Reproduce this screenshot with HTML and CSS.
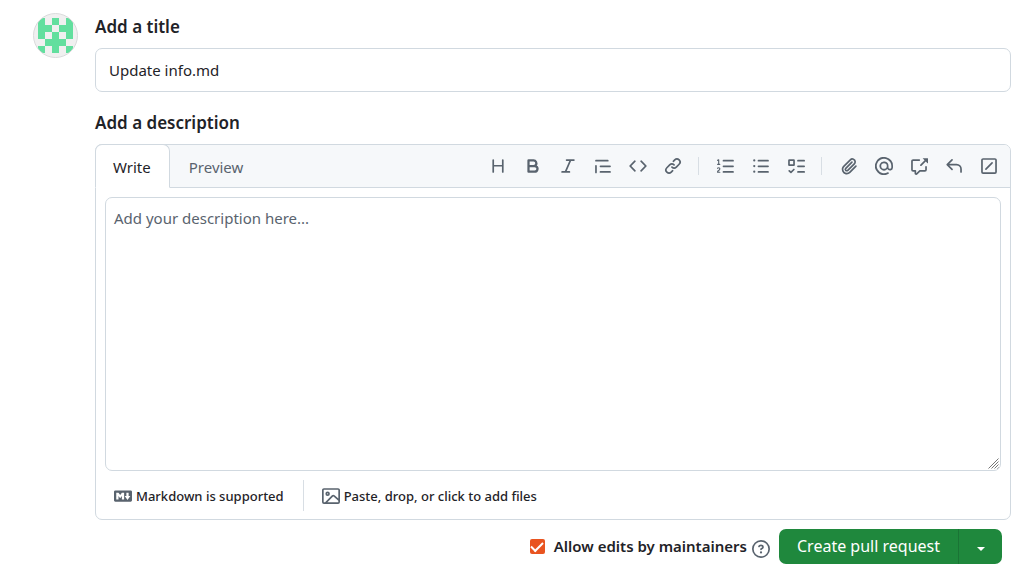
FILE: index.html
```html
<!DOCTYPE html>
<html lang="en">

<head>
	<meta charset="UTF-8">
	<meta name="viewport" content="width=device-width, initial-scale=1.0">
	<title>Open a pull request</title>
	<link rel="stylesheet" href="styles.css">
</head>

<body>
	<form class="pull-form">
		<svg class="avatar" viewBox="0 0 45 45" aria-hidden="true">
			<clipPath id="avatar-clip"><circle cx="22.5" cy="22.5" r="22" /></clipPath>
			<g clip-path="url(#avatar-clip)">
				<path fill="#f0f0f0" d="M0 0h45v45H0z" />
				<path fill="#62df9e" d="M5 5h7v7h7v7h-7v7H5zM19 5h7v7h-7zM33 5h7v21h-7v-7h-7v-7h7zM19 19h7v7h7v7h-7v7h-7v-7h-7v-7h7zM5 33h7v7H5zM33 33h7v7h-7z" />
			</g>
			<circle cx="22.5" cy="22.5" r="22" fill="none" stroke="#d9dadb" />
		</svg>

		<div class="fields">
			<label class="field-label" for="title">Add a title</label>
			<input class="title-input" type="text" id="title" value="Update info.md">

			<label class="field-label" for="description">Add a description</label>
			<div class="editor">
				<div class="editor-header">
					<div class="tabs">
						<button type="button" class="tab active">Write</button>
						<button type="button" class="tab">Preview</button>
					</div>
					<div class="toolbar">
						<button type="button" class="tool" aria-label="Heading"><svg class="icon" viewBox="0 0 16 16"><path d="M3.75 2a.75.75 0 0 1 .75.75V7h7V2.75a.75.75 0 0 1 1.5 0v10.5a.75.75 0 0 1-1.5 0V8.5h-7v4.75a.75.75 0 0 1-1.5 0V2.75A.75.75 0 0 1 3.75 2Z" /></svg></button>
						<button type="button" class="tool" aria-label="Bold"><svg class="icon" viewBox="0 0 16 16"><path d="M4 2h4.5a3.501 3.501 0 0 1 2.852 5.53A3.499 3.499 0 0 1 9.5 14H4a1 1 0 0 1-1-1V3a1 1 0 0 1 1-1Zm1 7v3h4.5a1.5 1.5 0 0 0 0-3Zm3.5-2a1.5 1.5 0 0 0 0-3H5v3Z" /></svg></button>
						<button type="button" class="tool" aria-label="Italic"><svg class="icon" viewBox="0 0 16 16"><path d="M6 2.75A.75.75 0 0 1 6.75 2h6.5a.75.75 0 0 1 0 1.5h-2.505l-3.858 9H9.25a.75.75 0 0 1 0 1.5h-6.5a.75.75 0 0 1 0-1.5h2.505l3.858-9H6.75A.75.75 0 0 1 6 2.75Z" /></svg></button>
						<button type="button" class="tool" aria-label="Quote"><svg class="icon" viewBox="0 0 16 16"><path d="M1.75 2.5h10.5a.75.75 0 0 1 0 1.5H1.75a.75.75 0 0 1 0-1.5Zm4 5h8.5a.75.75 0 0 1 0 1.5h-8.5a.75.75 0 0 1 0-1.5Zm0 5h8.5a.75.75 0 0 1 0 1.5h-8.5a.75.75 0 0 1 0-1.5ZM2.5 7.75v6a.75.75 0 0 1-1.5 0v-6a.75.75 0 0 1 1.5 0Z" /></svg></button>
						<button type="button" class="tool" aria-label="Code"><svg class="icon" viewBox="0 0 16 16"><path d="m11.28 3.22 4.25 4.25a.75.75 0 0 1 0 1.06l-4.25 4.25a.749.749 0 0 1-1.275-.326.749.749 0 0 1 .215-.734L13.94 8l-3.72-3.72a.749.749 0 0 1 .326-1.275.749.749 0 0 1 .734.215Zm-6.56 0a.751.751 0 0 1 1.042.018.751.751 0 0 1 .018 1.042L2.06 8l3.72 3.72a.749.749 0 0 1-.326 1.275.749.749 0 0 1-.734-.215L.47 8.53a.75.75 0 0 1 0-1.06Z" /></svg></button>
						<button type="button" class="tool" aria-label="Link"><svg class="icon" viewBox="0 0 16 16"><path d="m7.775 3.275 1.25-1.25a3.5 3.5 0 1 1 4.95 4.95l-2.5 2.5a3.5 3.5 0 0 1-4.95 0 .751.751 0 0 1 .018-1.042.751.751 0 0 1 1.042-.018 1.998 1.998 0 0 0 2.83 0l2.5-2.5a2.002 2.002 0 0 0-2.83-2.83l-1.25 1.25a.751.751 0 0 1-1.042-.018.751.751 0 0 1-.018-1.042Zm-4.69 9.64a1.998 1.998 0 0 0 2.83 0l1.25-1.25a.751.751 0 0 1 1.042.018.751.751 0 0 1 .018 1.042l-1.25 1.25a3.5 3.5 0 1 1-4.95-4.95l2.5-2.5a3.5 3.5 0 0 1 4.95 0 .751.751 0 0 1-.018 1.042.751.751 0 0 1-1.042.018 1.998 1.998 0 0 0-2.83 0l-2.5 2.5a1.998 1.998 0 0 0 0 2.83Z" /></svg></button>
						<span class="divider"></span>
						<button type="button" class="tool" aria-label="Numbered list"><svg class="icon" viewBox="0 0 16 16"><path d="M5 3.25a.75.75 0 0 1 .75-.75h8.5a.75.75 0 0 1 0 1.5h-8.5A.75.75 0 0 1 5 3.25Zm0 5a.75.75 0 0 1 .75-.75h8.5a.75.75 0 0 1 0 1.5h-8.5A.75.75 0 0 1 5 8.25Zm0 5a.75.75 0 0 1 .75-.75h8.5a.75.75 0 0 1 0 1.5h-8.5a.75.75 0 0 1-.75-.75ZM.924 10.32a.5.5 0 0 1-.851-.525l.001-.001.001-.002.002-.004.007-.011c.097-.144.215-.273.348-.384.228-.19.588-.392 1.068-.392.468 0 .858.181 1.126.484.259.294.377.673.377 1.038 0 .987-.686 1.495-1.156 1.845l-.047.035c-.303.225-.522.4-.654.597h1.357a.5.5 0 0 1 0 1H.5a.5.5 0 0 1-.5-.5c0-1.005.692-1.52 1.167-1.875l.035-.025c.531-.396.8-.625.8-1.078a.57.57 0 0 0-.128-.376C1.806 10.068 1.695 10 1.5 10a.658.658 0 0 0-.429.163.835.835 0 0 0-.144.153ZM2.003 2.5V6h.503a.5.5 0 0 1 0 1H.5a.5.5 0 0 1 0-1h.503V3.308l-.28.14a.5.5 0 0 1-.446-.895l1.003-.5a.5.5 0 0 1 .723.447Z" /></svg></button>
						<button type="button" class="tool" aria-label="Unordered list"><svg class="icon" viewBox="0 0 16 16"><path d="M5.75 2.5h8.5a.75.75 0 0 1 0 1.5h-8.5a.75.75 0 0 1 0-1.5Zm0 5h8.5a.75.75 0 0 1 0 1.5h-8.5a.75.75 0 0 1 0-1.5Zm0 5h8.5a.75.75 0 0 1 0 1.5h-8.5a.75.75 0 0 1 0-1.5ZM2 14a1 1 0 1 1 0-2 1 1 0 0 1 0 2Zm1-6a1 1 0 1 1-2 0 1 1 0 0 1 2 0ZM2 4a1 1 0 1 1 0-2 1 1 0 0 1 0 2Z" /></svg></button>
						<button type="button" class="tool" aria-label="Task list"><svg class="icon" viewBox="0 0 16 16"><path d="M2 2h4a1 1 0 0 1 1 1v4a1 1 0 0 1-1 1H2a1 1 0 0 1-1-1V3a1 1 0 0 1 1-1Zm4.655 8.595a.75.75 0 0 1 0 1.06L4.03 14.28a.75.75 0 0 1-1.06 0l-1.5-1.5a.749.749 0 0 1 .326-1.275.749.749 0 0 1 .734.215l.97.97 2.095-2.095a.75.75 0 0 1 1.06 0ZM9.75 2.5h5.5a.75.75 0 0 1 0 1.5h-5.5a.75.75 0 0 1 0-1.5Zm0 5h5.5a.75.75 0 0 1 0 1.5h-5.5a.75.75 0 0 1 0-1.5Zm0 5h5.5a.75.75 0 0 1 0 1.5h-5.5a.75.75 0 0 1 0-1.5Zm-7.25-9v3h3v-3Z" /></svg></button>
						<span class="divider"></span>
						<button type="button" class="tool" aria-label="Attach files"><svg class="icon" viewBox="0 0 16 16"><path d="M12.212 3.02a1.753 1.753 0 0 0-2.478.003l-5.83 5.83a3.007 3.007 0 0 0-.88 2.127c0 .795.315 1.551.88 2.116.567.567 1.333.89 2.126.89.79 0 1.548-.321 2.116-.89l5.48-5.48a.75.75 0 0 1 1.061 1.06l-5.48 5.48a4.492 4.492 0 0 1-3.177 1.33c-1.2 0-2.345-.487-3.187-1.33a4.483 4.483 0 0 1-1.32-3.177c0-1.195.475-2.341 1.32-3.186l5.83-5.83a3.25 3.25 0 0 1 5.553 2.297c0 .863-.343 1.691-.953 2.301L7.439 12.39c-.375.377-.884.59-1.416.593a1.998 1.998 0 0 1-1.412-.593 1.992 1.992 0 0 1 0-2.828l5.48-5.48a.751.751 0 0 1 1.042.018.751.751 0 0 1 .018 1.042l-5.48 5.48a.492.492 0 0 0 0 .707.499.499 0 0 0 .352.154.51.51 0 0 0 .356-.154l5.833-5.827a1.755 1.755 0 0 0 0-2.481Z" /></svg></button>
						<button type="button" class="tool" aria-label="Mention"><svg class="icon" viewBox="0 0 16 16"><path d="M4.75 2.37a6.501 6.501 0 0 0 6.5 11.26.75.75 0 0 1 .75 1.298A7.999 7.999 0 0 1 .989 4.148 8 8 0 0 1 16 7.75v1.5a2.75 2.75 0 0 1-5.072 1.475 3.999 3.999 0 0 1-6.65-4.19A4 4 0 0 1 12 8v1.25a1.25 1.25 0 0 0 2.5 0V7.867a6.5 6.5 0 0 0-9.75-5.496ZM10.5 8a2.5 2.5 0 1 0-5 0 2.5 2.5 0 0 0 5 0Z" /></svg></button>
						<button type="button" class="tool" aria-label="Reference"><svg class="icon" viewBox="0 0 16 16"><path d="M2.75 3.5a.25.25 0 0 0-.25.25v7.5c0 .138.112.25.25.25h2a.75.75 0 0 1 .75.75v2.19l2.72-2.72a.749.749 0 0 1 .53-.22h4.5a.25.25 0 0 0 .25-.25v-2.5a.75.75 0 0 1 1.5 0v2.5A1.75 1.75 0 0 1 13.25 13H9.06l-2.573 2.573A1.458 1.458 0 0 1 4 14.543V13H2.75A1.75 1.75 0 0 1 1 11.25v-7.5C1 2.784 1.784 2 2.75 2h5.5a.75.75 0 0 1 0 1.5ZM16 1.25v4.146a.25.25 0 0 1-.427.177L14.03 4.03l-3.75 3.75a.749.749 0 0 1-1.275-.326.749.749 0 0 1 .215-.734l3.75-3.75-1.543-1.543A.25.25 0 0 1 11.604 1h4.146a.25.25 0 0 1 .25.25Z" /></svg></button>
						<button type="button" class="tool" aria-label="Saved replies"><svg class="icon" viewBox="0 0 16 16"><path d="M6.78 1.97a.75.75 0 0 1 0 1.06L3.81 6h6.44A4.75 4.75 0 0 1 15 10.75v2.5a.75.75 0 0 1-1.5 0v-2.5a3.25 3.25 0 0 0-3.25-3.25H3.81l2.97 2.97a.749.749 0 0 1-.326 1.275.749.749 0 0 1-.734-.215L1.47 7.28a.75.75 0 0 1 0-1.06l4.25-4.25a.75.75 0 0 1 1.06 0Z" /></svg></button>
						<button type="button" class="tool" aria-label="Slash commands"><svg class="icon" viewBox="0 0 16 16"><path d="M13.25 1c.966 0 1.75.784 1.75 1.75v10.5A1.75 1.75 0 0 1 13.25 15H2.75A1.75 1.75 0 0 1 1 13.25V2.75C1 1.784 1.784 1 2.75 1ZM2.75 2.5a.25.25 0 0 0-.25.25v10.5c0 .138.112.25.25.25h10.5a.25.25 0 0 0 .25-.25V2.75a.25.25 0 0 0-.25-.25Zm8.53 3.28-5.5 5.5a.75.75 0 0 1-1.06-1.06l5.5-5.5a.75.75 0 0 1 1.06 1.06Z" /></svg></button>
					</div>
				</div>

				<div class="editor-body">
					<textarea class="description-input" id="description" placeholder="Add your description here..."></textarea>
					<svg class="grip" viewBox="0 0 11 11" aria-hidden="true"><path d="M.5 10.5l10-10M3.5 10.5l7-7M6.5 10.5l4-4M9.5 10.5l1-1" /></svg>
				</div>

				<div class="editor-footer">
					<a class="hint" href="#markdown">
						<svg class="icon" viewBox="0 0 16 16"><path d="M14.85 3c.63 0 1.15.52 1.14 1.15v7.7c0 .63-.51 1.15-1.15 1.15H1.15C.52 13 0 12.48 0 11.84V4.15C0 3.52.52 3 1.15 3ZM9 11V5H7L5.5 7 4 5H2v6h2V8l1.5 1.92L7 8v3Zm2.99.5L14.5 8H13V5h-2v3H9.5Z" /></svg>
						Markdown is supported
					</a>
					<button type="button" class="hint">
						<svg class="icon" viewBox="0 0 16 16"><path d="M16 13.25A1.75 1.75 0 0 1 14.25 15H1.75A1.75 1.75 0 0 1 0 13.25V2.75C0 1.784.784 1 1.75 1h12.5c.966 0 1.75.784 1.75 1.75ZM1.75 2.5a.25.25 0 0 0-.25.25v10.5c0 .138.112.25.25.25h.94l.03-.03 6.077-6.078a1.75 1.75 0 0 1 2.412-.06L14.5 10.31V2.75a.25.25 0 0 0-.25-.25Zm12.5 11a.25.25 0 0 0 .25-.25v-.917l-4.298-3.889a.25.25 0 0 0-.344.009L4.81 13.5ZM7 6a2 2 0 1 1-3.999.001A2 2 0 0 1 7 6ZM5.5 6a.5.5 0 1 0-1 0 .5.5 0 0 0 1 0Z" /></svg>
						Paste, drop, or click to add files
					</button>
				</div>
			</div>

			<div class="actions">
				<input class="checkbox" type="checkbox" id="allow-edits" checked>
				<label class="checkbox-label" for="allow-edits">Allow edits by maintainers</label>
				<a class="help" href="#help" aria-label="About maintainer edits"><svg class="icon" viewBox="0 0 16 16"><path d="M0 8a8 8 0 1 1 16 0A8 8 0 0 1 0 8Zm8-6.5a6.5 6.5 0 1 0 0 13 6.5 6.5 0 0 0 0-13ZM6.92 6.085h.001a.749.749 0 1 1-1.342-.67c.169-.339.436-.701.849-.977C6.845 4.16 7.369 4 8 4a2.756 2.756 0 0 1 1.637.525c.503.377.863.965.863 1.725 0 .448-.115.83-.329 1.15-.205.307-.47.513-.692.662-.109.072-.22.138-.313.195l-.006.004a6.24 6.24 0 0 0-.26.16.952.952 0 0 0-.276.245.75.75 0 0 1-1.248-.832c.184-.264.42-.489.692-.661.103-.067.207-.132.313-.195l.007-.004c.1-.061.182-.11.258-.161a.969.969 0 0 0 .277-.245C8.96 6.514 9 6.427 9 6.25a.612.612 0 0 0-.262-.525A1.27 1.27 0 0 0 8 5.5c-.369 0-.595.09-.74.187a1.01 1.01 0 0 0-.34.398ZM9 11a1 1 0 1 1-2 0 1 1 0 0 1 2 0Z" /></svg></a>
				<div class="button-group">
					<button type="submit" class="btn">Create pull request</button>
					<button type="button" class="btn btn-caret" aria-label="Select a type of pull request"><span class="caret"></span></button>
				</div>
			</div>
		</div>
	</form>
</body>

</html>
```
FILE: styles.css
```css
* {
	box-sizing: border-box;
}

body {
	margin: 0;
	background: #fff;
	color: #1f2328;
	font-family: "Noto Sans", sans-serif;
	font-size: 15px;
	line-height: 24px;
}

button,
input,
textarea {
	font: inherit;
	color: inherit;
}

button {
	border: 0;
	background: none;
	padding: 0;
	cursor: pointer;
}

.pull-form {
	display: flex;
	align-items: flex-start;
	gap: 17px;
	padding: 13px 9px 0 33px;
}

.avatar {
	flex: none;
	width: 45px;
	height: 45px;
}

.fields {
	flex: 1;
	min-width: 0;
}

.field-label {
	display: block;
	margin-bottom: 7px;
	font-size: 17px;
	font-weight: 600;
	line-height: 28px;
}

.title-input {
	display: block;
	width: 100%;
	height: 44px;
	margin-bottom: 17px;
	padding: 0 13px;
	border: 1px solid #d1d9e0;
	border-radius: 7px;
	background: #fff;
}

.editor {
	border: 1px solid #d1d9e0;
	border-radius: 7px;
}

.editor-header {
	display: flex;
	justify-content: space-between;
	height: 43px;
	border-bottom: 1px solid #d1d9e0;
	border-radius: 6px 6px 0 0;
	background: #f6f8fa;
}

.tabs {
	display: flex;
	margin: -1px 0 -1px -1px;
}

.tab {
	padding: 1px 18px 0;
	border: 1px solid transparent;
	color: #59636e;
}

.tab.active {
	padding-left: 17px;
	border-color: #d1d9e0;
	border-bottom-color: #fff;
	border-radius: 7px 7px 0 0;
	background: #fff;
	color: #1f2328;
}

.toolbar {
	display: flex;
	align-items: center;
	padding-right: 4px;
}

.tool {
	display: flex;
	align-items: center;
	justify-content: center;
	width: 35px;
	height: 35px;
}

.icon {
	display: block;
	flex: none;
	width: 18px;
	height: 18px;
	fill: #59636e;
}

.divider {
	width: 1px;
	height: 18px;
	margin: 0 9px 0 8px;
	background: #d8dee4;
}

.editor-body {
	position: relative;
	padding: 9px;
}

.description-input {
	display: block;
	width: 100%;
	height: 274px;
	padding: 8px;
	border: 1px solid #d1d9e0;
	border-radius: 7px;
	background: #fff;
	resize: none;
}

.description-input::placeholder {
	color: #59636e;
	opacity: 1;
}

.grip {
	position: absolute;
	right: 11px;
	bottom: 11px;
	width: 11px;
	height: 11px;
	fill: none;
	stroke: #777;
}

.editor-footer {
	display: flex;
	padding-bottom: 8px;
}

.hint {
	display: flex;
	align-items: center;
	gap: 4px;
	height: 31px;
	padding: 0 19px 0 18px;
	color: #1f2328;
	font-size: 13px;
	font-weight: 500;
	text-decoration: none;
}

.hint + .hint {
	border-left: 1px solid #d8dee4;
}

.actions {
	display: flex;
	align-items: center;
	justify-content: flex-end;
	padding: 9px 9px 0;
}

.checkbox {
	display: grid;
	place-content: center;
	width: 15px;
	height: 15px;
	margin: 0 9px 0 0;
	border-radius: 2px;
	background: #e95420;
	appearance: none;
}

.checkbox:checked::before {
	content: "";
	width: 10px;
	height: 5px;
	margin-bottom: 3px;
	border: solid #fff;
	border-width: 0 0 2px 2px;
	transform: rotate(-45deg);
}

.checkbox-label {
	padding-bottom: 2px;
	font-weight: 600;
}

.help {
	margin: 4px 9px 0 5px;
}

.button-group {
	display: flex;
	border-radius: 7px;
	background: #1f883d;
}

.btn {
	height: 35px;
	padding: 0 18px 2px;
	color: #fff;
	font-size: 16px;
}

.btn-caret {
	display: flex;
	align-items: center;
	justify-content: center;
	width: 44px;
	padding: 4px 0 0;
	border-left: 1px solid #1a7435;
}

.caret {
	border: 4px solid transparent;
	border-top-color: #fff;
	border-bottom: 0;
}
```
